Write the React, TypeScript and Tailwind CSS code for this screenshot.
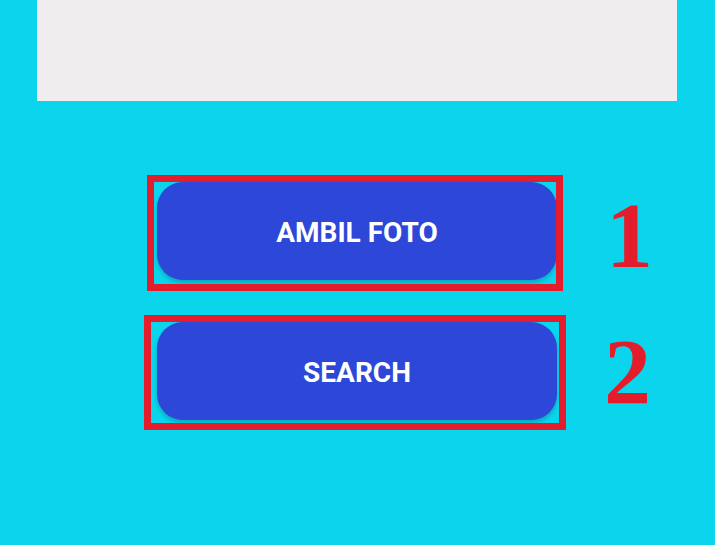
export default function App() {
  const buttons = [
    { label: "AMBIL FOTO", num: "1", box: "-left-[10px] -right-[6px] -top-[7px] -bottom-[11px]", numPos: "left-[449px] top-[6px]" },
    { label: "SEARCH", num: "2", box: "-left-[13px] -right-[9px] -top-[7px] -bottom-[10px]", numPos: "left-[447px] top-[2px]" },
  ];

  return (
    <div className="flex h-[545px] w-[715px] flex-col items-center bg-[#0bd5ec] font-['Roboto',sans-serif]">
      <div className="mr-[1px] h-[101px] w-[640px] bg-[#efeded]" />
      <div className="mr-[1px] mt-[81px] flex flex-col gap-[42px]">
        {buttons.map((b) => (
          <div key={b.label} className="relative">
            <button
              type="button"
              className="flex h-[98px] w-[400px] items-center justify-center rounded-[26px] bg-[#2d47d8] pt-[3px] text-[28px] font-bold text-white shadow-[0_3px_4px_rgba(0,0,0,0.2)]"
            >
              {b.label}
            </button>
            <div className={`pointer-events-none absolute border-[7px] border-[#e41d2c] ${b.box}`} />
            <span
              className={`absolute font-['Liberation_Serif',serif] text-[94px] font-bold leading-none text-[#e41d2c] ${b.numPos}`}
            >
              {b.num}
            </span>
          </div>
        ))}
      </div>
    </div>
  );
}
